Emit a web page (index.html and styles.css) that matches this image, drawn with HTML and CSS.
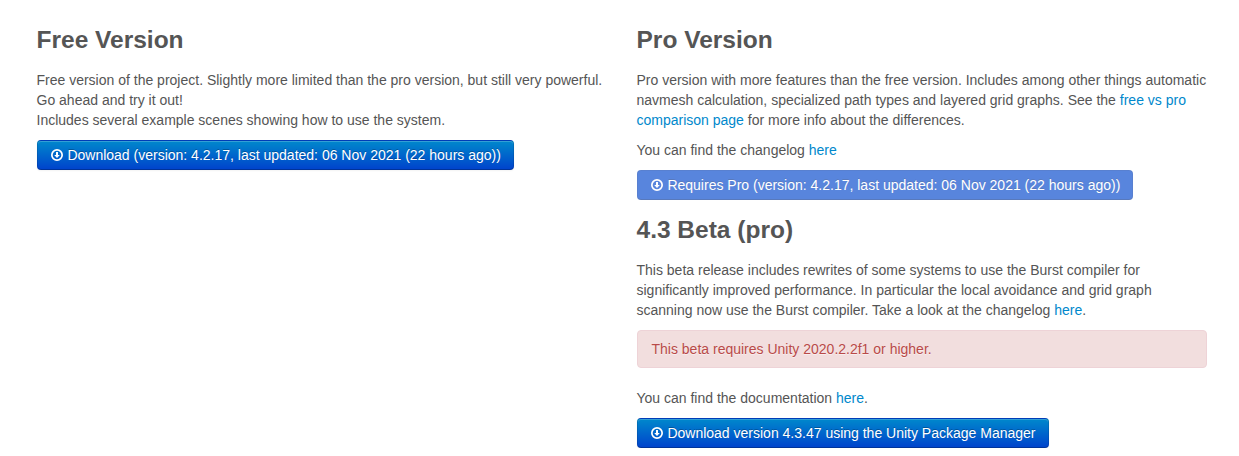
FILE: index.html
```
<!DOCTYPE html>
<html lang="en">
<head>
<meta charset="utf-8">
<title>Download</title>
<link rel="stylesheet" href="styles.css">
</head>
<body>
<svg class="defs" width="0" height="0" aria-hidden="true">
  <symbol id="download" viewBox="0 0 14 14">
    <path fill-rule="evenodd" d="M7 1a6 6 0 1 0 0 12A6 6 0 0 0 7 1zm0 1.7a4.3 4.3 0 1 1 0 8.600 4.300 4.300 0 0 1 0-8.600z"/>
    <path d="M6 4h2v3h1.800L7 10 4.200 7H6z"/>
  </symbol>
</svg>
<main class="row">
  <section class="column">
    <h2>Free Version</h2>
    <p>Free version of the project. Slightly more limited than the pro version, but still very powerful. Go ahead and try it out!<br>Includes several example scenes showing how to use the system.</p>
    <a class="btn"><svg class="icon"><use href="#download"/></svg> Download (version: 4.2.17, last updated: 06 Nov 2021 (22 hours ago))</a>
  </section>
  <section class="column">
    <h2>Pro Version</h2>
    <p>Pro version with more features than the free version. Includes among other things automatic navmesh calculation, specialized path types and layered grid graphs. See the <a class="link">free vs pro comparison page</a> for more info about the differences.</p>
    <p>You can find the changelog <a class="link">here</a></p>
    <a class="btn btn-disabled"><svg class="icon"><use href="#download"/></svg> Requires Pro (version: 4.2.17, last updated: 06 Nov 2021 (22 hours ago))</a>
    <h2>4.3 Beta (pro)</h2>
    <p>This beta release includes rewrites of some systems to use the Burst compiler for significantly improved performance. In particular the local avoidance and grid graph scanning now use the Burst compiler. Take a look at the changelog <a class="link">here</a>.</p>
    <div class="alert">This beta requires Unity 2020.2.2f1 or higher.</div>
    <p>You can find the documentation <a class="link">here</a>.</p>
    <a class="btn"><svg class="icon"><use href="#download"/></svg> Download version 4.3.47 using the Unity Package Manager</a>
  </section>
</main>
</body>
</html>
```
FILE: styles.css
```
body {
  margin: 0;
  background: #fff;
  color: #555;
  font: 14px/20px "Liberation Sans", Arial, sans-serif;
}
.defs { display: block; }
.row {
  display: grid;
  grid-template-columns: 570px 570px;
  column-gap: 30px;
  padding: 20px 0 0 36.5px;
}
.column {
  display: flex;
  flex-direction: column;
  align-items: flex-start;
}
h2 {
  margin: 0 0 10px;
  font-size: 24.5px;
  line-height: 40px;
}
p { margin: 0 0 10px; }
.link { color: #0088cc; }
.btn {
  box-sizing: border-box;
  height: 30px;
  padding: 4px 12px;
  border: 1px solid;
  border-color: rgba(0,0,0,.1) rgba(0,0,0,.1) rgba(0,0,0,.25);
  border-radius: 4px;
  background: #0044cc linear-gradient(#0088cc, #0044cc) repeat-x;
  box-shadow: inset 0 1px 0 rgba(255,255,255,.2), 0 1px 2px rgba(0,0,0,.05);
  color: #fff;
  text-shadow: 0 -1px 0 rgba(0,0,0,.25);
  white-space: nowrap;
}
.btn-disabled {
  background: #0044cc;
  box-shadow: none;
  opacity: .65;
  margin-bottom: 10px;
}
.icon {
  width: 14px;
  height: 14px;
  vertical-align: -2px;
  fill: #fff;
}
.alert {
  box-sizing: border-box;
  width: 100%;
  margin-bottom: 20px;
  padding: 8px 14px;
  border: 1px solid #eed3d7;
  border-radius: 4px;
  background: #f2dede;
  color: #b94a48;
  text-shadow: 0 1px 0 rgba(255,255,255,.5);
}
```
